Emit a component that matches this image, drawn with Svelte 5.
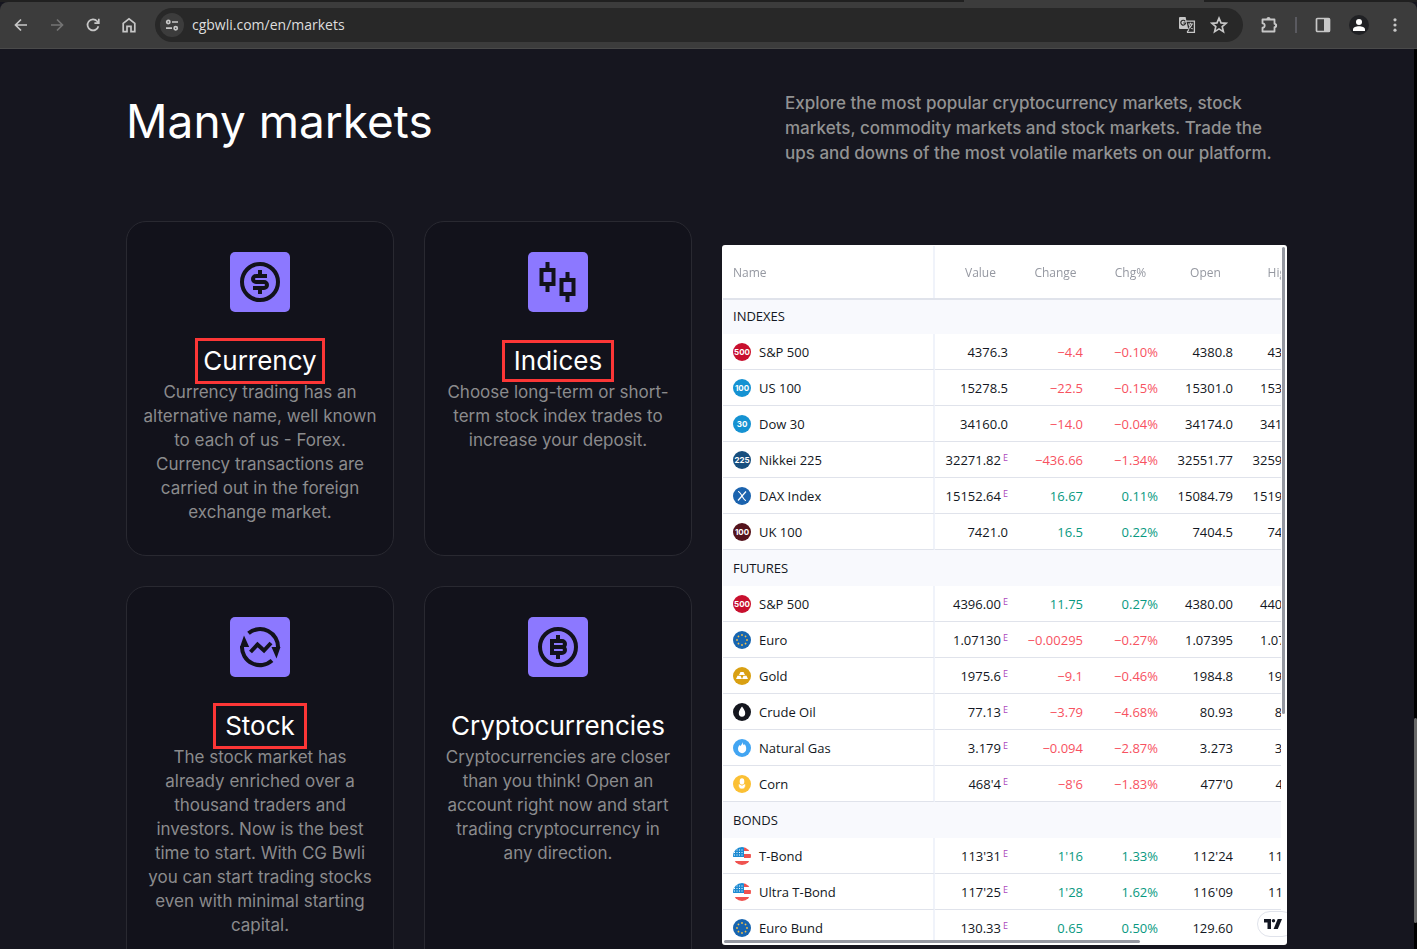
<script lang="ts">
  // line breaks are kept, the copy is set by hand for the narrow cards
  const cards = [
    { icon: 'currency', title: 'Currency', mark: 'mark', text: 'Currency trading has an\nalternative name, well known\nto each of us - Forex.\nCurrency transactions are\ncarried out in the foreign\nexchange market.' },
    { icon: 'indices', title: 'Indices', mark: 'mark short', text: 'Choose long-term or short-\nterm stock index trades to\nincrease your deposit.' },
    { icon: 'stock', title: 'Stock', mark: 'mark wide', text: 'The stock market has\nalready enriched over a\nthousand traders and\ninvestors. Now is the best\ntime to start. With CG Bwli\nyou can start trading stocks\neven with minimal starting\ncapital.' },
    { icon: 'crypto', title: 'Cryptocurrencies', mark: '', text: 'Cryptocurrencies are closer\nthan you think! Open an\naccount right now and start\ntrading cryptocurrency in\nany direction.' }
  ];

  // name, badge, value, end-of-day flag, change, change %, open, high
  const groups = [
    {
      title: 'INDEXES',
      rows: [
        ['S&P 500', 'sp', '4376.3', '', '−4.4', '−0.10%', '4380.8', '4385.1'],
        ['US 100', 'us', '15278.5', '', '−22.5', '−0.15%', '15301.0', '15333.5'],
        ['Dow 30', 'dow', '34160.0', '', '−14.0', '−0.04%', '34174.0', '34196.0'],
        ['Nikkei 225', 'nikkei', '32271.82', 'E', '−436.66', '−1.34%', '32551.77', '32599.38'],
        ['DAX Index', 'dax', '15152.64', 'E', '16.67', '0.11%', '15084.79', '15197.01'],
        ['UK 100', 'uk', '7421.0', '', '16.5', '0.22%', '7404.5', '7430.5']
      ]
    },
    {
      title: 'FUTURES',
      rows: [
        ['S&P 500', 'sp', '4396.00', 'E', '11.75', '0.27%', '4380.00', '4402.25'],
        ['Euro', 'euro', '1.07130', 'E', '−0.00295', '−0.27%', '1.07395', '1.07455'],
        ['Gold', 'gold', '1975.6', 'E', '−9.1', '−0.46%', '1984.8', '1986.3'],
        ['Crude Oil', 'oil', '77.13', 'E', '−3.79', '−4.68%', '80.93', '81.08'],
        ['Natural Gas', 'gas', '3.179', 'E', '−0.094', '−2.87%', '3.273', '3.287'],
        ['Corn', 'corn', '468\'4', 'E', '−8\'6', '−1.83%', '477\'0', '478\'2']
      ]
    },
    {
      title: 'BONDS',
      rows: [
        ['T-Bond', 'flag', '113\'31', 'E', '1\'16', '1.33%', '112\'24', '114\'05'],
        ['Ultra T-Bond', 'flag', '117\'25', 'E', '1\'28', '1.62%', '116\'09', '118\'02'],
        ['Euro Bund', 'euro', '130.33', 'E', '0.65', '0.50%', '129.60', '130.57']
      ]
    }
  ];

  const badges: Record<string, { bg: string; label?: string }> = {
    sp: { bg: '#c8102e', label: '500' },
    us: { bg: '#1592d2', label: '100' },
    dow: { bg: '#1592d2', label: '30' },
    nikkei: { bg: '#184f7e', label: '225' },
    dax: { bg: '#1b63ae' },
    uk: { bg: '#54131c', label: '100' },
    euro: { bg: '#1765b0' },
    gold: { bg: '#d9a012' },
    oil: { bg: '#14161e' },
    gas: { bg: '#42a5f2' },
    corn: { bg: '#fbc034' },
    flag: { bg: '#ffffff' }
  };

  const stars = [0, 45, 90, 135, 180, 225, 270, 315];
  let url = 'cgbwli.com/en/markets';
</script>

<div class="browser">
  <div class="tab-strip"><div class="tab-gap"></div></div>
  <div class="toolbar">
    <button class="tool" aria-label="Back">
      <svg width="16" height="16" viewBox="0 0 16 16" class="line"><path d="M14 8H3M8 2.5L2.5 8 8 13.5"/></svg>
    </button>
    <button class="tool dim" aria-label="Forward" disabled>
      <svg width="16" height="16" viewBox="0 0 16 16" class="line"><path d="M2 8h11M8 2.5L13.5 8 8 13.5"/></svg>
    </button>
    <button class="tool" aria-label="Reload">
      <svg width="16" height="16" viewBox="0 0 16 16" class="line"><path d="M13.4 9.2A5.5 5.5 0 1 1 12.2 4.3L13.6 5.8M13.8 1.8v4.4H9.4"/></svg>
    </button>
    <button class="tool" aria-label="Home">
      <svg width="16" height="16" viewBox="0 0 16 16" class="line"><path d="M2.2 6.3L8 1.8l5.8 4.5v8.3H10V9.4H6v5.2H2.2z"/></svg>
    </button>
    <div class="omnibox">
      <button class="site-info" aria-label="View site information">
        <svg width="14" height="14" viewBox="0 0 14 14" class="line"><circle cx="3.3" cy="4" r="1.6"/><path d="M7 4h6M1 10.2h6"/><circle cx="10.7" cy="10.2" r="1.6"/></svg>
      </button>
      <input class="url" type="text" aria-label="Address" bind:value={url} />
      <button class="inner-tool" aria-label="Translate this page">
        <svg width="18" height="18" viewBox="0 0 18 18">
          <path d="M8 5.2h8.4v11.2H9" fill="none" stroke="#c7c7c7" stroke-width="1.3"/>
          <path d="M2 1h5.6l2.6 12H2a1 1 0 0 1-1-1V2a1 1 0 0 1 1-1z" fill="#c7c7c7"/>
          <path d="M7.2 5.3A2.4 2.4 0 1 0 7.6 7H5.3" fill="none" stroke="#282828" stroke-width="1.2"/>
          <path d="M10 8h5M12.5 6.8V8M14 8.2c-.5 2-1.8 3.6-3.5 4.6M11 8.8c.8 1.8 2 3.2 3.6 4.2M9 16.4l2-3" fill="none" stroke="#c7c7c7" stroke-width="1.1"/>
        </svg>
      </button>
      <button class="inner-tool" aria-label="Bookmark this tab">
        <svg width="18" height="18" viewBox="0 0 18 18" class="line"><path d="M9 2.2l2 4.7 5.1.4-3.9 3.3 1.2 5L9 12.9l-4.400 2.7 1.200-5-3.9-3.3 5.1-.4z"/></svg>
      </button>
    </div>
    <button class="tool" aria-label="Extensions">
      <svg width="18" height="18" viewBox="0 0 18 18">
        <path d="M2.5 3.5h12v4.3a1.600 1.600 0 0 1 0 3.4v4.3h-12v-3.8a2.2 2.2 0 0 0 0-4.4z" fill="none" stroke="#c7c7c7" stroke-width="1.8" stroke-linejoin="round"/>
        <path d="M6.500 3a2 2 0 0 1 4 0zM15 7.500a2 2 0 0 1 0 4z" fill="#c7c7c7"/>
      </svg>
    </button>
    <div class="divider"></div>
    <button class="tool" aria-label="Side panel">
      <svg width="16" height="16" viewBox="0 0 16 16"><rect x="1.5" y="1.5" width="13" height="13" rx="1" fill="none" stroke="#c7c7c7" stroke-width="1.7"/><path d="M9 1.5h5.5v13H9z" fill="#c7c7c7"/></svg>
    </button>
    <button class="tool" aria-label="Profile">
      <svg width="20" height="20" viewBox="0 0 20 20"><circle cx="10" cy="10" r="10" fill="#202124"/><circle cx="10" cy="7" r="3" fill="#fff"/><path d="M4 16v-1.5C4 12.3 7 11.3 10 11.3s6 1 6 3.2V16z" fill="#fff"/></svg>
    </button>
    <button class="tool" aria-label="Menu">
      <svg width="16" height="16" viewBox="0 0 16 16" fill="#c7c7c7"><circle cx="8" cy="2.8" r="1.6"/><circle cx="8" cy="8" r="1.6"/><circle cx="8" cy="13.2" r="1.6"/></svg>
    </button>
  </div>

  <div class="viewport">
    <main class="page">
      <header class="intro">
        <h1>Many markets</h1>
        <p>Explore the most popular cryptocurrency markets, stock markets, commodity markets and stock markets. Trade the ups and downs of the most volatile markets on our platform.</p>
      </header>

      <div class="content">
        <div class="cards">
          {#each cards as card}
            <section class="card">
              <svg class="card-icon" width="60" height="60" viewBox="0 0 60 60">
                <rect width="60" height="60" rx="5" fill="#8c78ff"/>
                <g fill="none" stroke="#12121b" stroke-width="4">
                  {#if card.icon === 'currency'}
                    <circle cx="30" cy="30" r="18"/>
                    <path d="M37 24H26a3 3 0 0 0 0 6h8a3 3 0 0 1 0 6H23M30 18v5M30 37v5"/>
                  {:else if card.icon === 'indices'}
                    <path d="M13.5 18h12v14h-12zM19.5 10v6M19.5 34v6M33.5 28h12v14h-12zM39.5 20v6M39.5 44v6"/>
                  {:else if card.icon === 'stock'}
                    <path d="M18.5 16.2A18 18 0 0 1 48 31M42 43.5A18 18 0 0 1 12 29"/>
                    <path d="M20.5 35l7-7.5 6.500 6 7-7.5"/>
                    <path d="M14 18.5L19.2 30H10zM46.5 41.5L41.5 30h9z" fill="#12121b" stroke="none"/>
                  {:else}
                    <circle cx="30" cy="30" r="18"/>
                    <path d="M24 24v12h10a3 3 0 0 0 0-6H26M34 30a3 3 0 0 0 0-6H22M22 36h4M30 18v5M30 37v5"/>
                  {/if}
                </g>
              </svg>
              <h2><span class={card.mark}>{card.title}</span></h2>
              <p>{card.text}</p>
            </section>
          {/each}
        </div>

        <div class="widget">
          <div class="quotes">
            <table>
              <thead>
                <tr>
                  <th class="name">Name</th>
                  <th class="value">Value</th>
                  <th>Change</th>
                  <th>Chg%</th>
                  <th>Open</th>
                  <th>High</th>
                </tr>
              </thead>
              {#each groups as group}
                <tbody>
                  <tr class="group"><th colspan="6">{group.title}</th></tr>
                  {#each group.rows as [name, badge, value, flag, change, pct, open, high]}
                    <tr>
                      <td class="name">
                        <div class="symbol">
                          <svg width="18" height="18" viewBox="0 0 18 18">
                            <circle cx="9" cy="9" r="9" fill={badges[badge].bg}/>
                            {#if badges[badge].label}
                              <text x="9" y="12" text-anchor="middle" class="badge-text">{badges[badge].label}</text>
                            {:else if badge === 'dax'}
                              <path d="M5 4.5c3 0 5 9 8 9M13 4.5l-8 9" fill="none" stroke="#fff" stroke-width="1.2"/>
                            {:else if badge === 'euro'}
                              {#each stars as angle}
                                <circle cx="9" cy="4" r="0.9" fill="#f5c04a" transform="rotate({angle} 9 9)"/>
                              {/each}
                            {:else if badge === 'gold'}
                              <path d="M7.5 5h3l1.5 3H6zM4.5 8.8h3L9 12H3zM10.5 8.8h3L15 12H9z" fill="#fff"/>
                            {:else if badge === 'oil'}
                              <path d="M9 3.5c1.5 2.2 3.2 4.2 3.2 6.5A3.2 3.8 0 0 1 5.8 10C5.8 7.7 7.5 5.7 9 3.5z" fill="#fff"/>
                            {:else if badge === 'gas'}
                              <path d="M9.5 3c.3 2 .8 2.6 1.6 3.3l.6-1.3c1 1.5 1.5 3 1.5 4.7A4 4.2 0 0 1 5 10c0-1.7.7-2.9 1.7-4l.6 1C8.5 6 9.3 4.6 9.5 3z" fill="#fff"/>
                            {:else if badge === 'corn'}
                              <ellipse cx="9" cy="6.5" rx="2.3" ry="3.2" fill="#fff"/>
                              <path d="M5.5 9c1.300 0 2.500.6 3.500 1.500C10 9.600 11.200 9 12.500 9c.3 3-1 5-3.500 5s-3.800-2-3.500-5z" fill="#fff" stroke="#fbc034" stroke-width="0.6"/>
                            {:else}
                              <clipPath id="round"><circle cx="9" cy="9" r="9"/></clipPath>
                              <g clip-path="url(#round)">
                                <path d="M11 0h7v4h-7zM11 7h7v4h-7zM0 14h18v4H0z" fill="#ef5350"/>
                                <path d="M0 0h11v10H0z" fill="#1b8ad2"/>
                                <path d="M1 3h9M1 5.5h9M1 8h9" stroke="#fff" stroke-width="1" stroke-dasharray="1 1.5"/>
                              </g>
                            {/if}
                          </svg>
                          {name}
                        </div>
                      </td>
                      <td>{value}{#if flag}<sup>{flag}</sup>{/if}</td>
                      <td class={change.startsWith('−') ? 'down' : 'up'}>{change}</td>
                      <td class={change.startsWith('−') ? 'down' : 'up'}>{pct}</td>
                      <td>{open}</td>
                      <td>{high}</td>
                    </tr>
                  {/each}
                </tbody>
              {/each}
            </table>
          </div>
          <div class="thumb-y"></div>
          <div class="thumb-x"></div>
          <a class="tv" href="#tradingview" aria-label="TradingView">
            <svg width="18" height="10" viewBox="0 0 18 10" fill="#131722"><path d="M0 0h7v10H3.5V3.5H0z"/><circle cx="9.5" cy="1.8" r="1.7"/><path d="M13.7 0H18l-4.2 10H9.6z"/></svg>
          </a>
        </div>
      </div>
    </main>
    <div class="page-scroll"><div class="page-thumb"></div></div>
  </div>
</div>

<style>
:global(body) {
  background: #16161f;
}
.browser {
  height: 100vh;
  display: flex;
  flex-direction: column;
  overflow: hidden;
  background: #16161f;
  font-family: Inter, sans-serif;
}
button {
  border: none;
  background: none;
  padding: 0;
  display: flex;
  align-items: center;
  justify-content: center;
  cursor: pointer;
}
.tab-strip {
  height: 2px;
  flex-shrink: 0;
  background: #202020;
  display: flex;
}
.tab-gap {
  width: 17%;
  margin-left: 68%;
  background: #3c3c3c;
}
.toolbar {
  height: 46px;
  flex-shrink: 0;
  display: flex;
  align-items: center;
  padding: 0 4px 0 3px;
  background: #3c3c3c;
  border-bottom: 1px solid #4a4a4a;
  border-radius: 8px 8px 0 0;
}
.line {
  fill: none;
  stroke: #c7c7c7;
  stroke-width: 1.7;
}
.tool {
  width: 36px;
  height: 36px;
  flex-shrink: 0;
}
.dim {
  opacity: 0.4;
}
.omnibox {
  flex: 1;
  height: 34px;
  margin: 0 8px;
  padding: 0 8px 0 5px;
  border-radius: 17px;
  background: #282828;
  display: flex;
  align-items: center;
}
.site-info {
  width: 24px;
  height: 24px;
  border-radius: 50%;
  background: #3c3c3c;
}
.url {
  flex: 1;
  min-width: 0;
  margin-left: 8px;
  padding: 0 0 2px;
  border: none;
  outline: none;
  background: none;
  color: #dedede;
  font-family: 'Open Sans', sans-serif;
  font-size: 14px;
}
.inner-tool {
  width: 32px;
  height: 32px;
}
.divider {
  width: 2px;
  height: 16px;
  margin: 0 8px;
  background: #5a5a60;
}
.viewport {
  flex: 1;
  min-height: 0;
  display: flex;
  overflow: hidden;
}
.page {
  flex: 1;
  padding: 42px 127px 0 126px;
}
.page-scroll {
  width: 3px;
  background: #000;
  display: flex;
  flex-direction: column;
  justify-content: flex-end;
  padding-bottom: 26px;
  box-sizing: border-box;
}
.page-thumb {
  height: 205px;
  background: #686868;
  border-radius: 2px;
}
.intro {
  display: grid;
  grid-template-columns: 659fr 502fr;
  margin-bottom: 55px;
}
h1 {
  margin: 0;
  font-size: 46px;
  line-height: 60px;
  font-weight: 400;
  color: #fff;
}
.intro p {
  margin: 0;
  font-size: 17px;
  line-height: 25px;
  font-weight: 500;
  color: #929292;
}
.content {
  display: grid;
  grid-template-columns: 566fr 565fr;
  gap: 30px;
  align-items: start;
}
.cards {
  display: grid;
  grid-template-columns: 1fr 1fr;
  gap: 30px;
}
.card {
  padding: 30px 14px 31px;
  border: 1px solid #292931;
  border-radius: 20px;
  background: #12121b;
  text-align: center;
}
.card-icon {
  display: block;
  margin: 0 auto 30px;
}
h2 {
  margin: 0;
  font-size: 26px;
  line-height: 38px;
  font-weight: 400;
  color: #fff;
}
.card p {
  margin: 0;
  font-size: 17px;
  line-height: 24px;
  color: #8b8b8d;
  white-space: pre-line;
}
.mark {
  display: inline-block;
  position: relative;
}
.mark::after {
  content: '';
  position: absolute;
  inset: -4px -8px;
  border: 3px solid #fc3636;
}
.short::after {
  inset: -2px -12px;
}
.wide::after {
  inset: -4px -12px;
}
.widget {
  position: relative;
  height: 700px;
  margin-top: 24px;
  padding: 1px 6px 5px 1px;
  box-sizing: border-box;
  border-radius: 3px;
  background: #fff;
  overflow: hidden;
}
.quotes {
  height: 100%;
  overflow: hidden;
}
table {
  width: 595px;
  table-layout: fixed;
  border-collapse: separate;
  border-spacing: 0;
  font-family: 'Open Sans', sans-serif;
  font-size: 13px;
  line-height: 18px;
  color: #131722;
}
th,
td {
  box-sizing: border-box;
  height: 36px;
  padding: 0 10px 0 0;
  text-align: right;
  font-weight: 400;
  white-space: nowrap;
}
td {
  border-bottom: 1px solid #e0e3eb;
}
thead {
  position: sticky;
  top: 0;
  z-index: 1;
}
thead th {
  height: 52px;
  padding: 2px 0 0;
  text-align: center;
  font-size: 12px;
  color: #9598a1;
  background: #fff;
  box-shadow: 0 2px #e0e3eb;
}
thead .value {
  width: 83px;
  padding-left: 8px;
}
.name {
  width: 212px;
  padding-left: 10px;
  text-align: left;
  border-right: 2px solid #f0f3fa;
}
.group th {
  padding-left: 10px;
  text-align: left;
  background: #f8f9fd;
}
.symbol {
  display: flex;
  align-items: center;
  gap: 8px;
}
.badge-text {
  font-family: Inter, sans-serif;
  font-size: 8px;
  font-weight: 700;
  fill: #fff;
}
sup {
  margin-left: 2px;
  font-size: 9px;
  line-height: 0;
  vertical-align: 4px;
  color: #ab47bc;
}
.up {
  color: #089981;
}
.down {
  color: #f7525f;
}
.thumb-y,
.thumb-x {
  position: absolute;
  border-radius: 2px;
  background: #9598a1;
}
.thumb-y {
  top: 2px;
  right: 2px;
  width: 3px;
  height: 467px;
}
.thumb-x {
  left: 2px;
  bottom: 2px;
  width: 416px;
  height: 3px;
}
.tv {
  position: absolute;
  right: -8px;
  bottom: 8px;
  width: 38px;
  height: 26px;
  padding: 7px 0 0 6px;
  box-sizing: border-box;
  border: 1px solid #e0e3eb;
  border-radius: 13px;
  background: #fff;
}
.tv svg {
  display: block;
}
</style>
